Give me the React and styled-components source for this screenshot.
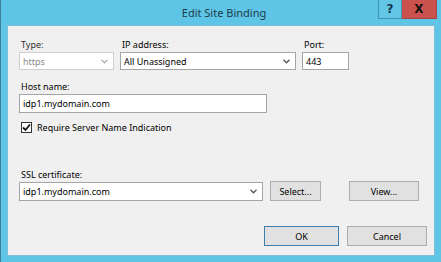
import React from "react";
import styled, { createGlobalStyle } from "styled-components";

const GlobalStyle = createGlobalStyle`
    html, body {
        margin: 0;
        padding: 0;
        background: #5fc5e6;
    }
    * {
        box-sizing: border-box;
    }
`;

const Window = styled.div`
    width: 441px;
    height: 262px;
    display: flex;
    flex-direction: column;
    background-color: #5fc5e6;
    border-left: 1px solid #3b7f99;
    font-family: "Noto Sans", "Open Sans", sans-serif;
    font-size: 9px;
    color: #000;
`;

const TitleBar = styled.div`
    height: 25px;
    display: flex;
    justify-content: center;
    align-items: flex-start;
    position: relative;
`;

const Title = styled.div`
    font-size: 11px;
    line-height: 25px;
    color: #1d3b4c;
    margin-left: 6px;
`;

const CaptionButtons = styled.div`
    position: absolute;
    top: 0;
    right: 4px;
    display: flex;
`;

const CaptionBtn = styled.div`
    height: 19px;
    width: ${({ wide }) => (wide ? "35px" : "24px")};
    display: flex;
    align-items: center;
    justify-content: center;
    background-color: ${({ danger }) => (danger ? "#c9524f" : "#62c6e7")};
    border: 1px solid ${({ danger }) => (danger ? "#a94442" : "#3f95b4")};
    border-top: none;
    border-left-width: ${({ danger }) => (danger ? 0 : 1)}px;
    color: ${({ danger }) => (danger ? "#111" : "#15334a")};
    font-weight: bold;
    font-family: "DejaVu Sans", sans-serif;
    font-size: 12px;
`;

const Client = styled.div`
    margin: 0 6px 6px 6px;
    flex: 1;
    background-color: #f0f0f0;
    border: 1px solid #7fbfd6;
    padding: 11px 0 0 11px;
    display: flex;
    flex-direction: column;
`;

const Row = styled.div`
    display: flex;
    align-items: flex-end;
    gap: ${({ gap }) => gap || 6}px;
    margin-top: ${({ top }) => top || 0}px;
`;

const Field = styled.div`
    display: flex;
    flex-direction: column;
    width: ${({ w }) => w}px;
`;

const Label = styled.div`
    line-height: 15px;
    height: 15px;
    padding-left: 2px;
    color: ${({ muted }) => (muted ? "#333" : "#000")};
`;

const Box = styled.div`
    height: ${({ h }) => h || 19}px;
    width: 100%;
    background-color: #fff;
    border: 1px solid ${({ disabled }) => (disabled ? "#cfcfcf" : "#a5a5a5")};
    color: ${({ disabled }) => (disabled ? "#8a8a8a" : "#000")};
    display: flex;
    align-items: center;
    padding: 0 5px 0 3px;
    line-height: 15px;
    white-space: nowrap;
`;

const BoxText = styled.span`
    flex: 1;
`;

const CheckRow = styled.label`
    display: flex;
    align-items: center;
    gap: 5px;
    margin-top: 7px;
    padding-left: 2px;
    height: 15px;
`;

const CheckBox = styled.span`
    width: 11px;
    height: 11px;
    border: 1px solid #333;
    background: #fff;
    display: flex;
    align-items: center;
    justify-content: center;
`;

const Button = styled.div`
    width: ${({ w }) => w}px;
    height: 20px;
    margin-left: ${({ left }) => left || 0}px;
    background-color: #e1e1e1;
    border: 1px solid ${({ primary }) => (primary ? "#3c7fb1" : "#adadad")};
    display: flex;
    align-items: center;
    justify-content: center;
    line-height: 15px;
`;

const Buttons = styled(Row)`
    margin-left: 245px;
    gap: 8px;
`;

const Chevron = ({ color = "#555" }) => (
    <svg width="7" height="5" viewBox="0 0 7 5">
        <polyline
            points="0.5,0.8 3.5,3.8 6.5,0.8"
            fill="none"
            stroke={color}
            strokeWidth="1.3"
        />
    </svg>
);

const Check = () => (
    <svg width="9" height="9" viewBox="0 0 9 9">
        <polyline
            points="1,4.5 3.5,7 8,1.5"
            fill="none"
            stroke="#111"
            strokeWidth="1.8"
        />
    </svg>
);

const App = () => {
    return (
        <>
            <GlobalStyle />
            <Window>
                <TitleBar>
                    <Title>Edit Site Binding</Title>
                    <CaptionButtons>
                        <CaptionBtn>?</CaptionBtn>
                        <CaptionBtn wide danger>
                            X
                        </CaptionBtn>
                    </CaptionButtons>
                </TitleBar>
                <Client>
                    <Row>
                        <Field w={95}>
                            <Label muted>Type:</Label>
                            <Box h={18} disabled>
                                <BoxText>https</BoxText>
                                <Chevron color="#b0b0b0" />
                            </Box>
                        </Field>
                        <Field w={176}>
                            <Label>IP address:</Label>
                            <Box h={18}>
                                <BoxText>All Unassigned</BoxText>
                                <Chevron />
                            </Box>
                        </Field>
                        <Field w={47}>
                            <Label>Port:</Label>
                            <Box h={18}>
                                <BoxText>443</BoxText>
                            </Box>
                        </Field>
                    </Row>
                    <Row top={9}>
                        <Field w={248}>
                            <Label>Host name:</Label>
                            <Box>
                                <BoxText>idp1.mydomain.com</BoxText>
                            </Box>
                        </Field>
                    </Row>
                    <CheckRow>
                        <CheckBox>
                            <Check />
                        </CheckBox>
                        Require Server Name Indication
                    </CheckRow>
                    <Row top={32} gap={7}>
                        <Field w={244}>
                            <Label>SSL certificate:</Label>
                            <Box>
                                <BoxText>idp1.mydomain.com</BoxText>
                                <Chevron />
                            </Box>
                        </Field>
                        <Button w={51}>Select...</Button>
                        <Button w={70} left={21}>
                            View...
                        </Button>
                    </Row>
                    <Buttons top={25}>
                        <Button w={75} primary>
                            OK
                        </Button>
                        <Button w={80}>Cancel</Button>
                    </Buttons>
                </Client>
            </Window>
        </>
    );
};

export default App;
